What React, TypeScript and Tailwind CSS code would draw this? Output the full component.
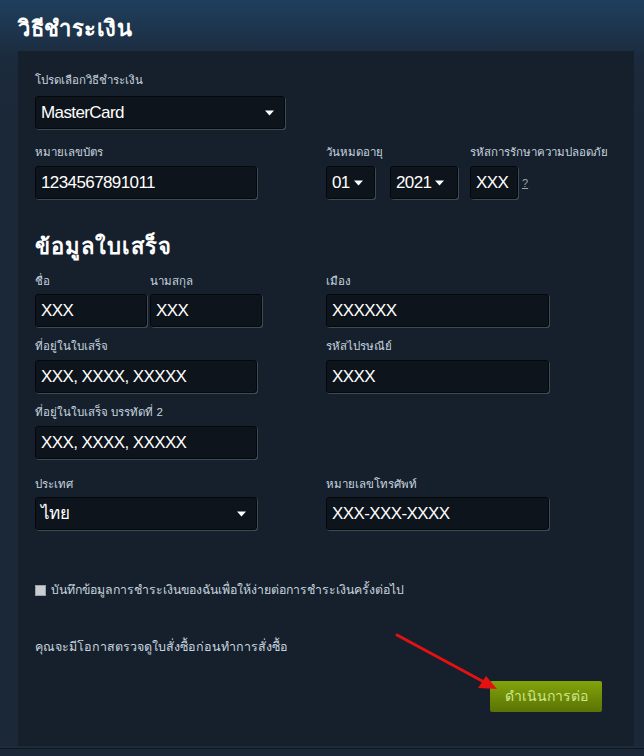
import React from "react";

function Label({ children, className = "" }: { children: React.ReactNode; className?: string }) {
  return <div className={`h-[14px] text-[11.5px] leading-[14px] text-[#c6d4df] whitespace-nowrap ${className}`}>{children}</div>;
}

function Field({ value, className = "" }: { value: string; className?: string }) {
  return (
    <div className={`h-[33px] flex items-center px-[5px] rounded-[3px] border border-[#05080b] bg-[#0e141b] shadow-[1px_1px_0_#3d4a58] text-[17px] tracking-[-0.6px] text-white whitespace-nowrap ${className}`}>
      {value}
    </div>
  );
}

function Caret() {
  return (
    <svg width="9" height="6" viewBox="0 0 9 6" className="shrink-0">
      <path d="M0 0.5h9L4.5 5.5z" fill="#ffffff" />
    </svg>
  );
}

function Select({ value, className = "", tight = false }: { value: string; className?: string; tight?: boolean }) {
  return (
    <div className={`h-[33px] flex items-center px-[5px] rounded-[3px] border border-[#05080b] bg-[#0e141b] shadow-[1px_1px_0_#3d4a58] text-[17px] tracking-[-0.6px] text-white whitespace-nowrap ${tight ? "gap-[4px]" : "justify-between pr-[10px]"} ${className}`}>
      <span>{value}</span>
      <Caret />
    </div>
  );
}

export default function App() {
  return (
    <div
      className="w-[644px] h-[756px] overflow-hidden relative bg-[linear-gradient(to_bottom,#1f3f5d_0px,#1b2a3c_60px,#1b2838_120px)]"
      style={{ fontFamily: "'Liberation Sans', Tahoma, 'Noto Sans', 'Noto Sans CJK SC', sans-serif" }}
    >
      <h1 className="pl-[18px] pt-[16px] h-[51px] text-[22px] leading-[26px] font-bold text-white tracking-[0.5px]">วิธีชำระเงิน</h1>

      <div className="ml-[18px] w-[616px] h-[695px] bg-[#16202d] pl-[17px] pt-[22px]">
        <Label className="mb-[9px]">โปรดเลือกวิธีชำระเงิน</Label>
        <Select value="MasterCard" className="w-[250px]" />

        <div className="grid grid-cols-[291px_1fr] mt-[16px]">
          <div>
            <Label className="mb-[7px]">หมายเลขบัตร</Label>
            <Field value="1234567891011" className="w-[222px]" />
          </div>
          <div className="flex">
            <div>
              <Label className="mb-[7px]">วันหมดอายุ</Label>
              <div className="flex gap-[15px]">
                <Select value="01" tight className="w-[49px]" />
                <Select value="2021" tight className="w-[68px]" />
              </div>
            </div>
            <div className="ml-[12px]">
              <Label className="mb-[7px]">รหัสการรักษาความปลอดภัย</Label>
              <div className="flex items-end gap-[4px]">
                <Field value="XXX" className="w-[48px]" />
                <span className="text-[11px] text-[#9aa5ad] underline mb-[8px]">?</span>
              </div>
            </div>
          </div>
        </div>

        <h2 className="mt-[33px] h-[30px] text-[22px] leading-[30px] font-bold text-white tracking-[1px]">ข้อมูลใบเสร็จ</h2>

        <div className="grid grid-cols-[291px_1fr] mt-[12px]">
          <div className="flex gap-[3px]">
            <div>
              <Label className="mb-[6px]">ชื่อ</Label>
              <Field value="XXX" className="w-[112px]" />
            </div>
            <div>
              <Label className="mb-[6px]">นามสกุล</Label>
              <Field value="XXX" className="w-[112px]" />
            </div>
          </div>
          <div>
            <Label className="mb-[6px]">เมือง</Label>
            <Field value="XXXXXX" className="w-[223px]" />
          </div>
        </div>

        <div className="grid grid-cols-[291px_1fr] mt-[12px]">
          <div>
            <Label className="mb-[7px]">ที่อยู่ในใบเสร็จ</Label>
            <Field value="XXX, XXXX, XXXXX" className="w-[222px]" />
          </div>
          <div>
            <Label className="mb-[7px]">รหัสไปรษณีย์</Label>
            <Field value="XXXX" className="w-[223px]" />
          </div>
        </div>

        <div className="mt-[12px]">
          <Label className="mb-[7px]">ที่อยู่ในใบเสร็จ บรรทัดที่ 2</Label>
          <Field value="XXX, XXXX, XXXXX" className="w-[222px]" />
        </div>

        <div className="grid grid-cols-[291px_1fr] mt-[18px]">
          <div>
            <Label className="mb-[6px]">ประเทศ</Label>
            <Select value="ไทย" className="w-[222px]" />
          </div>
          <div>
            <Label className="mb-[6px]">หมายเลขโทรศัพท์</Label>
            <Field value="XXX-XXX-XXXX" className="w-[223px]" />
          </div>
        </div>

        <div className="mt-[52px] h-[16px] flex items-center gap-[5px]">
          <span className="w-[11px] h-[11px] bg-[#c9ccd0] border border-[#9aa1a8]" />
          <span className="text-[12.3px] text-[#c6d4df]">บันทึกข้อมูลการชำระเงินของฉันเพื่อให้ง่ายต่อการชำระเงินครั้งต่อไป</span>
        </div>

        <div className="mt-[42px] h-[14px] text-[12.5px] leading-[14px] text-[#c6d4df]">คุณจะมีโอกาสตรวจดูใบสั่งซื้อก่อนทำการสั่งซื้อ</div>

        <div className="mt-[27px] flex justify-end pr-[32px]">
          <button className="w-[112px] h-[31px] rounded-[2px] bg-[linear-gradient(to_bottom,#83a30b,#5a7304)] text-[14px] text-[#cfe88a]">
            ดำเนินการต่อ
          </button>
        </div>
      </div>

      <div className="h-[2px] bg-[#1d2b3b]" />
      <div className="h-[1px] bg-[#10161e]" />

      <svg className="absolute left-0 top-0 pointer-events-none" width="644" height="756">
        <line x1="397" y1="635" x2="484" y2="682" stroke="#e31212" strokeWidth="3" strokeLinecap="round" />
        <path d="M497 689 L478 688 L486 676 Z" fill="#e31212" />
      </svg>
    </div>
  );
}
